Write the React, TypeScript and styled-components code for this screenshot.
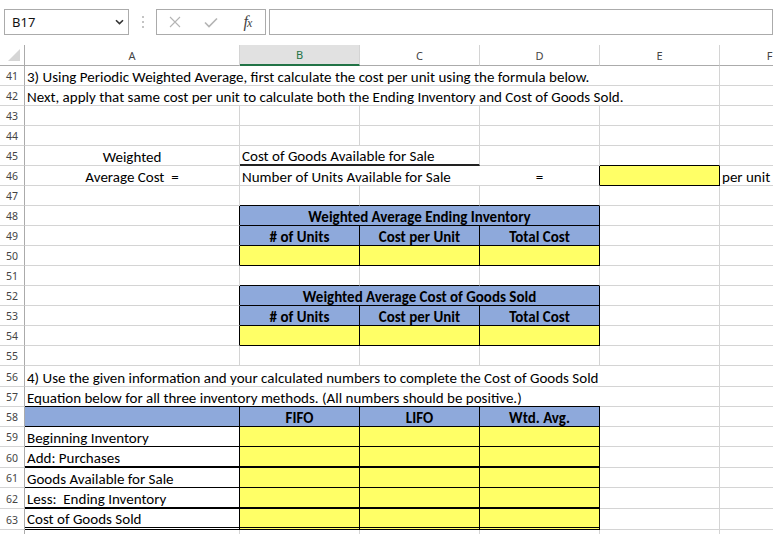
import React from "react";
import styled, { createGlobalStyle } from "styled-components";

const GRID = "#d4d4d4";
const HEAD_LINE = "#ababab";
const BLACK = "#000";
const BLUE = "#8ea9db";
const YELLOW = "#ffff66";
const CELL_FONT = `"Carlito", "Lato", "Open Sans", sans-serif`;
const UI_FONT = `"Noto Sans", "Open Sans", sans-serif`;

const GlobalStyle = createGlobalStyle`
  html, body {
    margin: 0;
    padding: 0;
    background: #fff;
    overflow: hidden;
  }
`;

const Page = styled.div`
  width: 773px;
  height: 534px;
  overflow: hidden;
  background: #fff;
`;

const TopBar = styled.div`
  display: flex;
  align-items: flex-start;
  height: 45px;
  padding: 9px 0 0 4px;
  box-sizing: border-box;
`;

const NameBox = styled.div`
  width: 129px;
  height: 26px;
  box-sizing: border-box;
  border: 1px solid ${HEAD_LINE};
  display: flex;
  align-items: center;
  justify-content: space-between;
  padding: 0 4px 0 7px;
  font: 13px ${UI_FONT};
  color: #111;
`;

const Dots = styled.div`
  width: 28px;
  height: 26px;
  display: flex;
  align-items: center;
  justify-content: center;
`;

const FxGroup = styled.div`
  width: 110px;
  height: 26px;
  box-sizing: border-box;
  border: 1px solid ${HEAD_LINE};
  display: grid;
  grid-template-columns: repeat(3, 36px);
  align-items: center;
  justify-items: center;
`;

const FxMark = styled.span`
  font: italic 16px "Liberation Serif", serif;
  line-height: 16px;
  color: #444;
  letter-spacing: -1px;
  sub {
    font-size: 12px;
    vertical-align: baseline;
  }
`;

const FormulaBox = styled.div`
  margin-left: 3px;
  width: 520px;
  height: 26px;
  box-sizing: border-box;
  border: 1px solid ${HEAD_LINE};
`;

const Sheet = styled.div`
  width: 820px;
`;

const Row = styled.div<{ $h: number }>`
  display: grid;
  grid-template-columns: 25px 215px repeat(4, 120px) 100px;
  height: ${(p) => p.$h}px;
`;

const Corner = styled.div`
  box-sizing: border-box;
  border-right: 1px solid ${HEAD_LINE};
  border-bottom: 1px solid ${HEAD_LINE};
  display: flex;
  align-items: flex-end;
  justify-content: flex-end;
  padding: 0 4px 4px 0;
`;

const ColHead = styled.div<{ $active?: boolean }>`
  box-sizing: border-box;
  border-right: 1px solid ${GRID};
  border-bottom: ${(p) => (p.$active ? "2px solid #217346" : `1px solid ${HEAD_LINE}`)};
  background: ${(p) => (p.$active ? "#e1e1e1" : "#fff")};
  color: ${(p) => (p.$active ? "#217346" : "#444")};
  display: flex;
  align-items: center;
  justify-content: center;
  font: 11px ${UI_FONT};
`;

const RowNum = styled.div`
  box-sizing: border-box;
  border-right: 1px solid ${HEAD_LINE};
  border-bottom: 1px solid ${GRID};
  display: flex;
  align-items: flex-end;
  justify-content: center;
  padding-bottom: 2px;
  font: 10.5px ${UI_FONT};
  color: #444;
`;

type CellProps = {
  $span?: number;
  $bg?: string;
  $r?: string | null;
  $b?: string;
  $bw?: number;
  $dbl?: boolean;
  $center?: boolean;
  $bold?: boolean;
};

const Cell = styled.div<CellProps>`
  grid-column: span ${(p) => p.$span ?? 1};
  box-sizing: border-box;
  min-width: 0;
  background: ${(p) => p.$bg ?? "transparent"};
  border-right: ${(p) => (p.$r === null ? "none" : `1px solid ${p.$r ?? GRID}`)};
  border-bottom: ${(p) => p.$bw ?? 1}px ${(p) => (p.$dbl ? "double" : "solid")}
    ${(p) => p.$b ?? GRID};
  display: flex;
  align-items: flex-end;
  justify-content: ${(p) => (p.$center ? "center" : "flex-start")};
  padding: 0 2px 0;
  white-space: pre;
  font-family: ${CELL_FONT};
  font-size: 15px;
  line-height: 16px;
  font-weight: ${(p) => (p.$bold ? 700 : 400)};
  color: #000;
`;

type C = {
  t?: string;
  span?: number;
  bg?: string;
  r?: string | null;
  b?: string;
  bw?: number;
  dbl?: boolean;
  center?: boolean;
  bold?: boolean;
};

type R = { n: number; h: number; cells: C[]; hideNum?: boolean };

const blank = (): C => ({});
const head = (t: string, span = 1): C => ({ t, span, bg: BLUE, r: BLACK, b: BLACK, bold: true, center: true });
const input = (bw = 1, dbl = false): C => ({ bg: YELLOW, r: BLACK, b: BLACK, bw, dbl });

const noteRow = (n: number, t: string, h = 20, under?: string): R => ({
  n,
  h,
  cells: [
    { t, r: null, b: under },
    { r: null, b: under },
    { r: null, b: under },
    { r: null, b: under },
    blank(),
    blank(),
  ],
});

const topEdge = (n: number): R => ({
  n,
  h: 20,
  cells: [blank(), { b: BLACK }, { b: BLACK }, { b: BLACK }, blank(), blank()],
});

const tableHead = (n: number, title: string): R => ({
  n,
  h: 20,
  cells: [{ r: BLACK }, head(title, 3), blank(), blank()],
});

const tableCols = (n: number): R => ({
  n,
  h: 20,
  cells: [{ r: BLACK }, head("# of Units"), head("Cost per Unit"), head("Total Cost"), blank(), blank()],
});

const tableInputs = (n: number): R => ({
  n,
  h: 20,
  cells: [{ r: BLACK }, input(), input(), input(), blank(), blank()],
});

const empty = (n: number, h = 20): R => ({ n, h, cells: [blank(), blank(), blank(), blank(), blank(), blank()] });

const costRow = (n: number, label: string, h = 20, bw = 1, dbl = false): R => ({
  n,
  h,
  cells: [{ t: label, r: BLACK, b: BLACK, bw, dbl }, input(bw, dbl), input(bw, dbl), input(bw, dbl), blank(), blank()],
});

const rows: R[] = [
  noteRow(41, "3) Using Periodic Weighted Average, first calculate the cost per unit using the formula below."),
  noteRow(42, "Next, apply that same cost per unit to calculate both the Ending Inventory and Cost of Goods Sold."),
  empty(43),
  empty(44),
  {
    n: 45,
    h: 20,
    cells: [
      { t: "Weighted", center: true },
      { t: "Cost of Goods Available for Sale", r: null, b: "#222", bw: 2 },
      { b: "#222", bw: 2 },
      blank(),
      { b: BLACK },
      blank(),
    ],
  },
  {
    n: 46,
    h: 20,
    cells: [
      { t: "Average Cost  =", center: true },
      { t: "Number of Units Available for Sale", r: null },
      { r: null },
      { t: "=", center: true, r: BLACK },
      { bg: YELLOW, r: BLACK, b: BLACK },
      { t: "per unit" },
    ],
  },
  topEdge(47),
  tableHead(48, "Weighted Average Ending Inventory"),
  tableCols(49),
  tableInputs(50),
  topEdge(51),
  tableHead(52, "Weighted Average Cost of Goods Sold"),
  tableCols(53),
  tableInputs(54),
  empty(55),
  noteRow(56, "4) Use the given information and your calculated numbers to complete the Cost of Goods Sold", 21),
  noteRow(57, "Equation below for all three inventory methods. (All numbers should be positive.)", 20, BLACK),
  {
    n: 58,
    h: 20,
    cells: [{ bg: BLUE, r: BLACK, b: BLACK }, head("FIFO"), head("LIFO"), head("Wtd. Avg."), blank(), blank()],
  },
  costRow(59, "Beginning Inventory"),
  costRow(60, "Add: Purchases", 21, 2),
  costRow(61, "Goods Available for Sale"),
  costRow(62, "Less:  Ending Inventory", 21, 2),
  costRow(63, "Cost of Goods Sold", 21, 3, true),
  { ...empty(64), hideNum: true },
];

const columns = ["A", "B", "C", "D", "E", "F"];

const Chevron = () => (
  <svg width="9" height="6" viewBox="0 0 9 6">
    <path d="M1 1.2 L4.5 4.6 L8 1.2" fill="none" stroke="#333" strokeWidth="1.6" />
  </svg>
);

const VDots = () => (
  <svg width="4" height="14" viewBox="0 0 4 14">
    <rect x="1" y="1" width="2" height="2" fill="#c4c4c4" />
    <rect x="1" y="6" width="2" height="2" fill="#c4c4c4" />
    <rect x="1" y="11" width="2" height="2" fill="#c4c4c4" />
  </svg>
);

const CrossIcon = () => (
  <svg width="12" height="12" viewBox="0 0 12 12">
    <path d="M1 1 L11 11 M11 1 L1 11" stroke="#b4b4b4" strokeWidth="1.1" />
  </svg>
);

const CheckIcon = () => (
  <svg width="14" height="11" viewBox="0 0 14 11">
    <path d="M1 5.5 L5 9.5 L13 1.5" fill="none" stroke="#b4b4b4" strokeWidth="1.6" />
  </svg>
);

const CornerMark = () => (
  <svg width="12" height="12" viewBox="0 0 12 12">
    <polygon points="12,0 12,12 0,12" fill="#d6d6d6" />
  </svg>
);

export default function App() {
  return (
    <Page>
      <GlobalStyle />
      <TopBar>
        <NameBox>
          <span>B17</span>
          <Chevron />
        </NameBox>
        <Dots>
          <VDots />
        </Dots>
        <FxGroup>
          <CrossIcon />
          <CheckIcon />
          <FxMark>
            f<sub>x</sub>
          </FxMark>
        </FxGroup>
        <FormulaBox />
      </TopBar>
      <Sheet>
        <Row $h={21}>
          <Corner>
            <CornerMark />
          </Corner>
          {columns.map((c) => (
            <ColHead key={c} $active={c === "B"}>
              {c}
            </ColHead>
          ))}
        </Row>
        {rows.map((row) => (
          <Row key={row.n} $h={row.h}>
            <RowNum>{row.hideNum ? "" : row.n}</RowNum>
            {row.cells.map((c, i) => (
              <Cell
                key={i}
                $span={c.span}
                $bg={c.bg}
                $r={c.r}
                $b={c.b}
                $bw={c.bw}
                $dbl={c.dbl}
                $center={c.center}
                $bold={c.bold}
              >
                {c.t}
              </Cell>
            ))}
          </Row>
        ))}
      </Sheet>
    </Page>
  );
}
